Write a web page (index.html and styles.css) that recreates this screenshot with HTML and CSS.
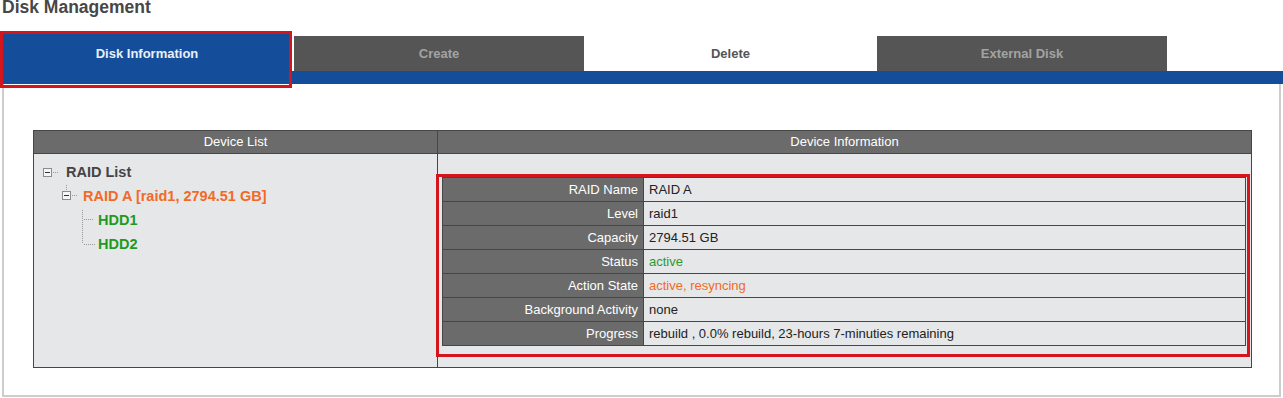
FILE: index.html
```html
<!DOCTYPE html>
<html lang="en">
<head>
    <meta charset="UTF-8">
    <title>Disk Management</title>
    <link rel="stylesheet" href="styles.css">
</head>
<body>
    <h1 class="page-title">Disk Management</h1>

    <div class="tabs">
        <div class="tab active">Disk Information</div>
        <div class="tab">Create</div>
        <div class="tab plain">Delete</div>
        <div class="tab">External Disk</div>
    </div>
    <div class="tab-bar"></div>

    <div class="panel">
        <div class="device-table">
            <div class="head-cell list-col">Device List</div>
            <div class="head-cell">Device Information</div>

            <!-- device tree -->
            <div class="body-cell list-col">
                <div class="tree">
                    <div class="tree-row root">
                        <svg width="20" height="23" viewBox="0 0 20 23">
                            <rect x="0.5" y="7.5" width="8" height="8" fill="#f6f6f6" stroke="#8c8c8c"/>
                            <line x1="2" y1="11.5" x2="7" y2="11.5" stroke="#333"/>
                            <line x1="10" y1="11.5" x2="16" y2="11.5" stroke="#9a9a9a" stroke-dasharray="1 1"/>
                        </svg>
                        <span class="node-label">RAID List</span>
                    </div>
                    <div class="tree-row raid">
                        <svg width="18" height="24" viewBox="0 0 18 24">
                            <line x1="4.5" y1="1" x2="4.5" y2="7" stroke="#9a9a9a" stroke-dasharray="1 1"/>
                            <rect x="0.5" y="7.5" width="8" height="8" fill="#f6f6f6" stroke="#8c8c8c"/>
                            <line x1="2" y1="11.5" x2="7" y2="11.5" stroke="#333"/>
                            <line x1="10" y1="11.5" x2="16" y2="11.5" stroke="#9a9a9a" stroke-dasharray="1 1"/>
                        </svg>
                        <span class="node-label orange">RAID A [raid1, 2794.51 GB]</span>
                    </div>
                    <div class="tree-row disk">
                        <svg width="14" height="24" viewBox="0 0 14 24">
                            <line x1="0.5" y1="2" x2="0.5" y2="24" stroke="#9a9a9a" stroke-dasharray="1 1"/>
                            <line x1="2" y1="11.5" x2="12" y2="11.5" stroke="#9a9a9a" stroke-dasharray="1 1"/>
                        </svg>
                        <span class="node-label green">HDD1</span>
                    </div>
                    <div class="tree-row disk">
                        <svg width="14" height="24" viewBox="0 0 14 24">
                            <line x1="0.5" y1="0" x2="0.5" y2="12" stroke="#9a9a9a" stroke-dasharray="1 1"/>
                            <line x1="2" y1="12.5" x2="13" y2="12.5" stroke="#9a9a9a" stroke-dasharray="1 1"/>
                        </svg>
                        <span class="node-label green">HDD2</span>
                    </div>
                </div>
            </div>

            <!-- selected device details -->
            <div class="body-cell">
                <div class="highlight">
                    <div class="info">
                        <div class="info-row"><div class="info-label">RAID Name</div><div class="info-value">RAID A</div></div>
                        <div class="info-row"><div class="info-label">Level</div><div class="info-value">raid1</div></div>
                        <div class="info-row"><div class="info-label">Capacity</div><div class="info-value">2794.51 GB</div></div>
                        <div class="info-row"><div class="info-label">Status</div><div class="info-value green-text">active</div></div>
                        <div class="info-row"><div class="info-label">Action State</div><div class="info-value orange-text">active, resyncing</div></div>
                        <div class="info-row"><div class="info-label">Background Activity</div><div class="info-value">none</div></div>
                        <div class="info-row"><div class="info-label">Progress</div><div class="info-value">rebuild , 0.0% rebuild, 23-hours 7-minuties remaining</div></div>
                    </div>
                </div>
            </div>
        </div>
    </div>
</body>
</html>
```

FILE: styles.css
```css
:root {
    --blue: #144e9b;
    --tab-dark: #555555;
    --head: #6b6b6b;
    --cell: #e6e7e8;
    --line: #464646;
    --mark: #d3161d;
    --orange: #f26a25;
    --green: #1e9a1e;
}

body {
    margin: 0;
    font-family: 'Liberation Sans', Arial, sans-serif;
    color: #222;
    background: white;
}

.page-title {
    margin: 0;
    padding-left: 2px;
    font-size: 17.5px;
    line-height: 14px;
    font-weight: bold;
    color: #474747;
}

/* tabs */
.tabs {
    display: flex;
    align-items: flex-end;
    margin-top: 20px;
    padding-left: 2px;
}

.tab {
    box-sizing: border-box;
    width: 290px;
    height: 35px;
    padding-top: 1px;
    line-height: 34px;
    text-align: center;
    font-size: 13px;
    font-weight: bold;
    background: var(--tab-dark);
    color: #a3a3a3;
}

.tab.active {
    position: relative;
    height: 37px;
    padding-top: 3px;
    margin-right: 2px;
    background: var(--blue);
    color: #eaf0f7;
}

.tab.active::after {
    content: '';
    position: absolute;
    top: -3px;
    left: -2px;
    right: 0;
    bottom: -17px;
    border: 3px solid var(--mark);
    z-index: 1;
}

.tab.plain {
    width: 293px;
    background: white;
    color: #555;
}

.tab-bar {
    height: 13px;
    background: var(--blue);
}

/* panel */
.panel {
    margin: 0 2px;
    padding: 46px 27px 27px 29px;
    border: 2px solid #cdcdcd;
    border-top: none;
}

.device-table {
    display: grid;
    grid-template-columns: 404px 1fr;
    border: 1px solid var(--line);
}

.head-cell {
    height: 22px;
    line-height: 22px;
    text-align: center;
    font-size: 13px;
    color: white;
    background: var(--head);
    border-bottom: 1px solid var(--line);
}

.list-col {
    border-right: 1px solid var(--line);
}

.body-cell {
    background: var(--cell);
    height: 213px;
}

/* tree */
.tree {
    padding-top: 7px;
}

.tree-row {
    display: flex;
    height: 24px;
    line-height: 24px;
    font-size: 14.5px;
    font-weight: bold;
}

.tree-row svg {
    display: block;
    flex: none;
    margin-right: 3px;
}

.tree-row.root {
    height: 23px;
    line-height: 23px;
    padding-left: 9px;
}

.tree-row.raid {
    padding-left: 28px;
}

.tree-row.disk {
    padding-left: 48px;
}

.tree-row.disk svg {
    margin-right: 2px;
}

.node-label {
    color: #444;
}

.node-label.orange {
    color: var(--orange);
}

.node-label.green {
    color: var(--green);
}

/* info */
.highlight {
    margin: 20px 1px 0 -2px;
    padding: 0 1px 8px 3px;
    border: 3px solid var(--mark);
}

.info {
    border: 1px solid var(--line);
    border-bottom: none;
}

.info-row {
    display: grid;
    grid-template-columns: 201px 1fr;
    height: 23px;
    line-height: 23px;
    font-size: 13px;
    border-bottom: 1px solid var(--line);
}

.info-label {
    text-align: right;
    padding-right: 5px;
    color: white;
    background: var(--head);
    border-right: 1px solid var(--line);
}

.info-value {
    padding-left: 5px;
    color: #222;
}

.green-text {
    color: #2c9a2c;
}

.orange-text {
    color: var(--orange);
}
```
